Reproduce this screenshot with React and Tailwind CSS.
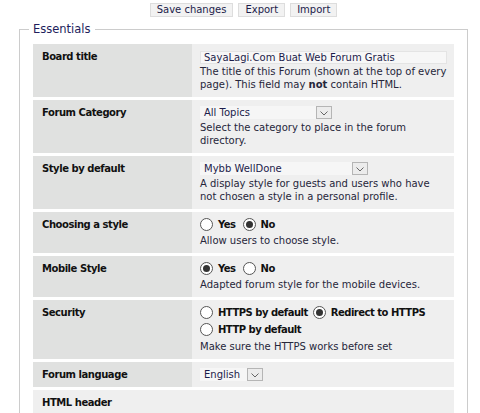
import { useState } from "react";

const descCls = "text-[10px] leading-[13px] text-[#26263a]";

function Select({ value, width }) {
  return (
    <div className={`flex h-[13px] items-stretch bg-[#f6f6f6] ${width}`}>
      <span className="flex-1 pl-[4px] text-[10px] leading-[13px] text-[#1c1c4a]">{value}</span>
      <span className="flex w-[16px] items-center justify-center border border-[#b5b5b5] bg-[#ececec]">
        <svg width="8" height="5" viewBox="0 0 8 5" className="mt-[2px]">
          <path d="M0.5 0.5 L4 4 L7.5 0.5" fill="none" stroke="#666" strokeWidth="1" />
        </svg>
      </span>
    </div>
  );
}

function Radio({ label, checked, onClick }) {
  return (
    <button type="button" onClick={onClick} className="flex items-center gap-[5px]">
      <span className="flex h-[13px] w-[13px] items-center justify-center rounded-full border border-[#555] bg-white">
        {checked && <span className="h-[7px] w-[7px] rounded-full bg-[#333]" />}
      </span>
      <span className="text-[10px] font-bold leading-[13px] tracking-[-0.5px] text-[#111]">{label}</span>
    </button>
  );
}

function Radios({ options, value, onChange }) {
  return (
    <div className="flex gap-[7px]">
      {options.map((o) => (
        <Radio key={o} label={o} checked={value === o} onClick={() => onChange(o)} />
      ))}
    </div>
  );
}

function Row({ label, children, light }) {
  return (
    <div className="flex">
      <div className={`w-[159px] shrink-0 px-[9px] py-[6px] text-[10px] font-bold leading-[13px] tracking-[-0.45px] text-[#111] ${light ? "bg-[#efefef]" : "bg-[#e0e1e0]"}`}>
        {label}
      </div>
      <div className="flex-1 bg-[#efefef] py-[6px] pl-[8px] pr-[5px]">{children}</div>
    </div>
  );
}

export default function App() {
  const [choosing, setChoosing] = useState("No");
  const [mobile, setMobile] = useState("Yes");
  const [security, setSecurity] = useState("Redirect to HTTPS");

  return (
    <div className="h-[413px] overflow-hidden bg-white font-['DejaVu_Sans',Verdana,sans-serif]">
      <div className="ml-[19px] w-[449px]">
        <div className="flex justify-center gap-[5px] pt-[3px]">
          {["Save changes", "Export", "Import"].map((b) => (
            <button key={b} className="h-[14px] border border-[#dddddd] bg-[#f2f2f2] px-[6px] text-[10px] leading-[12px] text-[#1c1c4a]">
              {b}
            </button>
          ))}
        </div>

        <fieldset className="mt-[5px] border border-[#cccccc] px-[13px] pb-[20px] pt-[7px]">
          <legend className="-ml-[4px] px-[4px] text-[11.5px] leading-[15px] text-[#221d5c]">Essentials</legend>

          <div className="flex flex-col gap-[3px]">
            <Row label="Board title">
              <div className="mt-[1px] h-[13px] w-[247px] border border-[#e4e4e4] bg-[#f7f7f7] pl-[3px] text-[10px] leading-[11px] text-[#1c1c4a]">
                SayaLagi.Com Buat Web Forum Gratis
              </div>
              <p className={`${descCls} mt-[1px]`}>
                The title of this Forum (shown at the top of every page). This field may <b>not</b> contain HTML.
              </p>
            </Row>

            <Row label="Forum Category">
              <Select value="All Topics" width="w-[132px]" />
              <p className={`${descCls} mt-[2px]`}>Select the category to place in the forum directory.</p>
            </Row>

            <Row label="Style by default">
              <Select value="Mybb WellDone" width="w-[168px]" />
              <p className={`${descCls} mt-[2px]`}>
                A display style for guests and users who have not chosen a style in a personal profile.
              </p>
            </Row>

            <Row label="Choosing a style">
              <Radios options={["Yes", "No"]} value={choosing} onChange={setChoosing} />
              <p className={`${descCls} mt-[3px]`}>Allow users to choose style.</p>
            </Row>

            <Row label="Mobile Style">
              <Radios options={["Yes", "No"]} value={mobile} onChange={setMobile} />
              <p className={`${descCls} mt-[3px]`}>Adapted forum style for the mobile devices.</p>
            </Row>

            <Row label="Security">
              <div className="flex flex-wrap gap-x-[5px] gap-y-[4px]">
                {["HTTPS by default", "Redirect to HTTPS", "HTTP by default"].map((o) => (
                  <Radio key={o} label={o} checked={security === o} onClick={() => setSecurity(o)} />
                ))}
              </div>
              <p className={`${descCls} mt-[4px]`}>Make sure the HTTPS works before set</p>
            </Row>

            <Row label="Forum language">
              <Select value="English" width="w-[63px]" />
            </Row>

            <Row label="HTML header" light>
              <div className="h-[40px]" />
            </Row>
          </div>
        </fieldset>
      </div>
    </div>
  );
}
